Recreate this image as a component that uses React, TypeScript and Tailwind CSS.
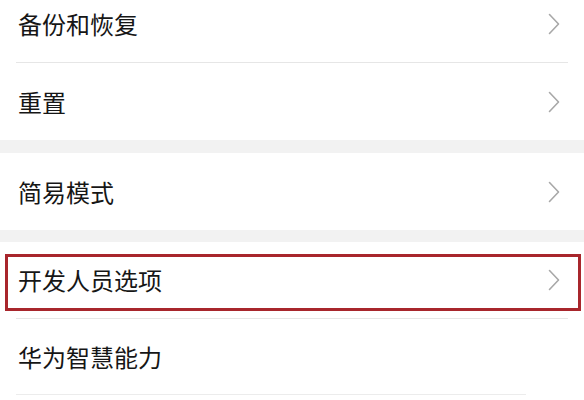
import { ReactNode } from "react";

function Chevron() {
  return (
    <svg className="h-[22px] w-[12px] shrink-0 text-[#a8a8a8]" viewBox="0 0 12 22" fill="none" stroke="currentColor" strokeWidth="1.6" strokeLinecap="round" strokeLinejoin="round">
      <path d="M1.5 1.5L10.5 11L1.5 20.5" />
    </svg>
  );
}

function Row({ label, divider = true, chevron = true, children }: { label: string; divider?: boolean; chevron?: boolean; children?: ReactNode }) {
  return (
    <div className="relative h-[77px] px-[16px]">
      <div className={`flex h-full items-center justify-between pl-[2px] pr-[8px] ${divider ? "border-b border-[#e6e6e6]" : ""}`}>
        <span className="text-[24px] leading-none text-[#161616]">{label}</span>
        {chevron && <Chevron />}
      </div>
      {children}
    </div>
  );
}

export default function App() {
  return (
    <div
      className="h-[400px] w-[584px] overflow-hidden bg-white"
      style={{ fontFamily: '"Noto Sans CJK SC", "Noto Sans", sans-serif' }}
    >
      <div className="-mt-[14px]">
        <Row label="备份和恢复" />
        <Row label="重置" divider={false} />
        <div className="h-[13px] bg-[#f2f2f2]" />
        <Row label="简易模式" divider={false} />
        <div className="h-[12px] bg-[#f2f2f2]" />
        <Row label="开发人员选项">
          {/* red highlight frame */}
          <div className="pointer-events-none absolute top-[12px] bottom-[8px] left-[5px] right-[3px] border-[3px] border-[#a8262c]" />
        </Row>
        <div className="px-[16px]">
          <div className="mr-[42px] flex h-[76px] items-center border-b border-[#ececec] pl-[2px]">
            <span className="text-[24px] leading-none text-[#161616]">华为智慧能力</span>
          </div>
        </div>
      </div>
    </div>
  );
}
